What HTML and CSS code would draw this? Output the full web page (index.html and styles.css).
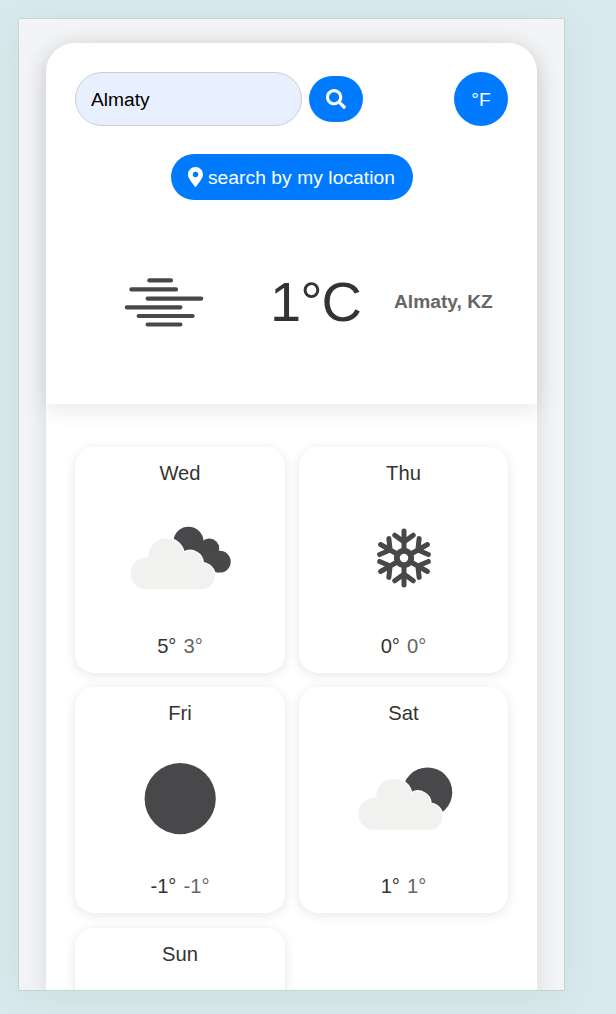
FILE: index.html
```html
<!DOCTYPE html>
<html lang="en">
<head>
<meta charset="utf-8">
<title>Weather</title>
<link rel="stylesheet" href="styles.css">
</head>
<body>
<div class="frame">
  <main class="app">
    <section class="current">
      <div class="toolbar">
        <input class="city-input" type="text" value="Almaty" aria-label="City">
        <button class="btn btn-search" aria-label="Search">
          <svg width="20" height="20" viewBox="0 0 512 512"><path fill="#fff" d="M505 442.700L405.300 343c-4.500-4.500-10.600-7-17-7H372c27.600-35.300 44-79.700 44-128C416 93.100 322.900 0 208 0S0 93.100 0 208s93.100 208 208 208c48.300 0 92.700-16.400 128-44v16.300c0 6.400 2.500 12.500 7 17l99.700 99.700c9.400 9.400 24.600 9.400 33.900 0l28.300-28.300c9.400-9.400 9.400-24.600.1-34zM208 336c-70.700 0-128-57.200-128-128 0-70.700 57.200-128 128-128 70.700 0 128 57.200 128 128 0 70.700-57.200 128-128 128z"/></svg>
        </button>
        <button class="btn btn-unit"><span>°F</span></button>
      </div>
      <button class="btn btn-location">
        <svg width="15" height="20" viewBox="0 0 384 512"><path fill="#fff" d="M172 502C27 291 0 270 0 192 0 86 86 0 192 0s192 86 192 192c0 78-27 99-172 310-10 13-30 13-40 0zM192 262a70 70 0 1 0 0-140 70 70 0 0 0 0 140z"/></svg>
        <span>search by my location</span>
      </button>
      <div class="summary">
        <svg class="mist" width="120" height="120" viewBox="104 242 120 120"><path fill="none" stroke="#48484a" stroke-width="4.200" stroke-linecap="round" d="M149.300 280.400H171M131.400 289.400H176M147.600 298.600H201.200M126.800 307.300H180.400M138.700 316H192.600M147.600 324.500H180.400"/></svg>
        <div class="temperature">1°C</div>
        <div class="place">Almaty, KZ</div>
      </div>
    </section>
    <section class="forecast">
      <article class="day">
        <h2>Wed</h2>
        <svg width="120" height="120" viewBox="120 499 120 120">
          <g fill="#48484a"><circle cx="188.500" cy="541.700" r="15"/><circle cx="209.300" cy="548.600" r="10"/><circle cx="219.800" cy="561.700" r="10.900"/><path d="M190 540L212 548 221 562 218 572.500 200 568z"/></g>
          <path class="cloud-edge" d="M146.400 589.300a15.900 15.900 0 0 1 0-31.800h2.100a17.800 17.800 0 0 1 35.200-4.800a12.700 12.700 0 0 1 19.200 10.400a13.200 13.200 0 0 1 0.400 26.200z"/>
        </svg>
        <p>5° <span class="low">3°</span></p>
      </article>
      <article class="day">
        <h2>Thu</h2>
        <svg width="120" height="120" viewBox="-60 -59 120 120">
          <defs><path id="arm" d="M0-9V-27M-9.200-22.800L0-16L9.200-22.800"/></defs>
          <g fill="none" stroke="#48484a" stroke-width="5" stroke-linecap="round"><circle r="7.200" stroke-width="6"/><use href="#arm"/><use href="#arm" transform="rotate(60)"/><use href="#arm" transform="rotate(120)"/><use href="#arm" transform="rotate(180)"/><use href="#arm" transform="rotate(240)"/><use href="#arm" transform="rotate(300)"/></g>
        </svg>
        <p>0° <span class="low">0°</span></p>
      </article>
      <article class="day">
        <h2>Fri</h2>
        <svg width="120" height="120" viewBox="120 739 120 120"><circle cx="180.200" cy="798.700" r="35.600" fill="#48484a"/></svg>
        <p>-1° <span class="low">-1°</span></p>
      </article>
      <article class="day">
        <h2>Sat</h2>
        <svg width="120" height="120" viewBox="343.500 739 120 120">
          <circle cx="427" cy="792.200" r="24.800" fill="#48484a"/>
          <path class="cloud-edge" transform="translate(227.200 240.500)" d="M146.400 589.300a15.900 15.900 0 0 1 0-31.800h2.100a17.800 17.800 0 0 1 35.200-4.800a12.700 12.700 0 0 1 19.200 10.400a13.200 13.200 0 0 1 0.400 26.200z"/>
        </svg>
        <p>1° <span class="low">1°</span></p>
      </article>
      <article class="day">
        <h2>Sun</h2>
      </article>
    </section>
  </main>
</div>
</body>
</html>
```
FILE: styles.css
```css
* { box-sizing: border-box; }

body {
  margin: 0;
  padding: 19px 0 0 19px;
  height: 1014px;
  overflow: hidden;
  background: #d8eaed;
  font-family: "Liberation Sans", Arial, sans-serif;
  font-size: 19.2px;
  color: #333;
}

.frame {
  width: 545px;
  height: 971px;
  padding: 24px 27px 0;
  overflow: hidden;
  background: #f3f4f6;
  box-shadow: 0 0 1px rgba(0, 0, 0, .4), 0 5px 36px rgba(120, 120, 100, .1);
}

.app {
  height: 1200px;
  border-radius: 29px;
  background: #fff;
  box-shadow: 0 5px 24px rgba(0, 0, 0, .1);
}

.current {
  height: 361px;
  padding: 29px;
  border-radius: 29px 29px 0 0;
  background: #fff;
  box-shadow: 0 5px 24px rgba(0, 0, 0, .1);
}

.toolbar {
  display: flex;
  align-items: center;
  height: 54px;
}

.city-input {
  width: 227px;
  height: 54px;
  padding: 2px 15px 0;
  border: 1px solid #c9ced8;
  border-radius: 27px;
  outline: 0;
  background: #e8f0fe;
  font: inherit;
  color: #000;
}

.btn {
  display: flex;
  align-items: center;
  justify-content: center;
  height: 46px;
  padding: 0;
  border: 0;
  border-radius: 24px;
  background: #007bff;
  font: inherit;
  color: #fff;
}

.btn span { padding-top: 1px; }

.btn-search { width: 54px; margin-left: 7px; }
.btn-unit { width: 54px; height: 54px; margin-left: auto; border-radius: 50%; }
.btn-location { gap: 5px; width: 242px; margin: 28px auto 0; letter-spacing: .08px; }

.summary {
  display: flex;
  align-items: center;
  height: 120px;
  margin-top: 42px;
}

.mist { margin-left: 29px; }

.temperature {
  width: 94px;
  margin-left: 46px;
  font-size: 56px;
  line-height: 1;
  letter-spacing: -1px;
}

.place {
  margin-left: 30px;
  font-weight: bold;
  color: #666;
  white-space: nowrap;
}

.forecast {
  display: grid;
  grid-template-columns: 210px 209px;
  grid-auto-rows: 226px;
  gap: 14.4px 14px;
  padding: 43px 29px;
}

.day {
  display: flex;
  flex-direction: column;
  align-items: center;
  padding-top: 14px;
  border-radius: 19px;
  background: #fff;
  box-shadow: 0 2px 12px rgba(0, 0, 0, .1);
}

.day h2 {
  margin: 0 0 14px;
  font-size: 20.2px;
  font-weight: normal;
  line-height: 24px;
}

.day p {
  margin: 15px 0 0;
  font-size: 20.2px;
  line-height: 24px;
  word-spacing: 1.5px;
}

.low { color: #666; }

.cloud-edge {
  fill: #f1f1f0;
  stroke: #fff;
  stroke-width: 2.4;
  paint-order: stroke;
}
```
